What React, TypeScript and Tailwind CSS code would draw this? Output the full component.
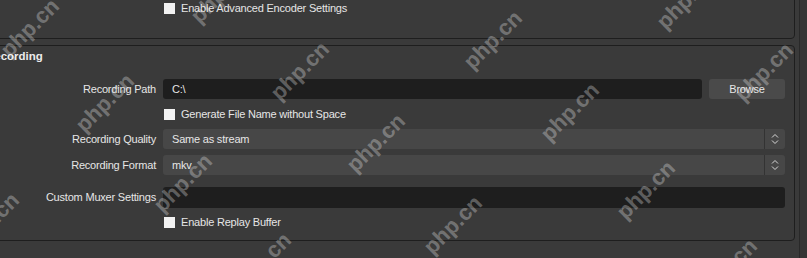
import React from "react";

const marks: { cls: string; text: string }[] = [
  { cls: "left-[30px] top-[28px]", text: "php.cn" },
  { cls: "left-[220px] top-[-6px]", text: "php.cn" },
  { cls: "left-[300px] top-[71px]", text: "php.cn" },
  { cls: "left-[493px] top-[40px]", text: "php.cn" },
  { cls: "left-[686px] top-[0px]", text: "php.cn" },
  { cls: "left-[764px] top-[72px]", text: "php.cn" },
  { cls: "left-[105px] top-[103px]", text: "php.cn" },
  { cls: "left-[376px] top-[143px]", text: "php.cn" },
  { cls: "left-[570px] top-[112px]", text: "php.cn" },
  { cls: "left-[183px] top-[183px]", text: "php.cn" },
  { cls: "left-[646px] top-[190px]", text: "php.cn" },
  { cls: "left-[453px] top-[225px]", text: "php.cn" },
  { cls: "left-[-10px] top-[222px]", text: "php.cn" },
  { cls: "left-[262px] top-[262px]", text: "php.cn" },
  { cls: "left-[728px] top-[268px]", text: "php.cn" },
];

function Checkbox({ label }: { label: string }) {
  return (
    <div className="flex items-center h-[11px]">
      <div className="w-[11px] h-[11px] bg-[#f2f2f2]" />
      <span className="ml-[6px] leading-[11px]">{label}</span>
    </div>
  );
}

function Label({ children }: { children: React.ReactNode }) {
  return <div className="w-[175px] shrink-0 text-right">{children}</div>;
}

function Combo({ value }: { value: string }) {
  return (
    <div className="flex-1 h-[20px] flex items-center bg-[#474747] rounded-[3px]">
      <span className="flex-1 pl-[9px]">{value}</span>
      <div className="w-px h-full bg-[#333333]" />
      <div className="w-[20px] h-full flex items-center justify-center">
        <svg width="8" height="12" viewBox="0 0 8 12" fill="none" stroke="#d8d8d8" strokeWidth="1">
          <path d="M1 4.5 L4 1.5 L7 4.5" />
          <path d="M1 7.5 L4 10.5 L7 7.5" />
        </svg>
      </div>
    </div>
  );
}

export default function App() {
  return (
    <div className="relative w-[807px] h-[258px] overflow-hidden bg-[#3a3a3a] flex text-[11px] tracking-[-0.2px] text-[#e6e6e6] font-['Liberation_Sans',Arial,sans-serif]">
      <div className="flex-1 flex flex-col min-w-0">
        {/* top group */}
        <div className="ml-[-20px] mr-[4px] mt-[-10px] h-[49px] shrink-0 border border-[#1e1e1e] rounded-[4px] pl-[183px] pt-[12px]">
          <Checkbox label="Enable Advanced Encoder Settings" />
        </div>
        {/* recording group */}
        <div className="ml-[-20px] mr-[4px] mt-[6px] h-[196px] shrink-0 border border-[#1e1e1e] rounded-[4px] flex flex-col pr-[9px]">
          <div className="pl-[5px] pt-[2px] leading-[16px] font-bold text-[11.5px] tracking-normal text-[#ececec]">Recording</div>
          <div className="mt-[15px] flex items-center h-[20px]">
            <Label>Recording Path</Label>
            <div className="ml-[7px] flex-1 h-full flex gap-[7px]">
              <div className="flex-1 h-full bg-[#1e1e1e] rounded-[3px] flex items-center pl-[9px]">C:\</div>
              <div className="w-[76px] h-full bg-[#4a4a4a] rounded-[3px] flex items-center justify-center">Browse</div>
            </div>
          </div>
          <div className="mt-[10px] pl-[183px]">
            <Checkbox label="Generate File Name without Space" />
          </div>
          <div className="mt-[9px] flex items-center h-[20px]">
            <Label>Recording Quality</Label>
            <div className="ml-[7px] flex-1 flex">
              <Combo value="Same as stream" />
            </div>
          </div>
          <div className="mt-[6px] flex items-center h-[20px]">
            <Label>Recording Format</Label>
            <div className="ml-[7px] flex-1 flex">
              <Combo value="mkv" />
            </div>
          </div>
          <div className="mt-[12px] flex items-center h-[21px]">
            <Label>Custom Muxer Settings</Label>
            <div className="ml-[7px] flex-1 h-full bg-[#1e1e1e] rounded-[3px]" />
          </div>
          <div className="mt-[9px] pl-[183px]">
            <Checkbox label="Enable Replay Buffer" />
          </div>
        </div>
      </div>
      <div className="w-[8px] shrink-0 bg-[#353535] border-l border-[#292929]" />
      {marks.map((m, i) => (
        <span
          key={i}
          className={`pointer-events-none absolute ${m.cls} -translate-x-1/2 -translate-y-1/2 -rotate-45 whitespace-nowrap font-bold text-[22px] tracking-normal leading-none text-white/30 font-['Liberation_Sans',Arial,sans-serif]`}
        >
          {m.text}
        </span>
      ))}
    </div>
  );
}
